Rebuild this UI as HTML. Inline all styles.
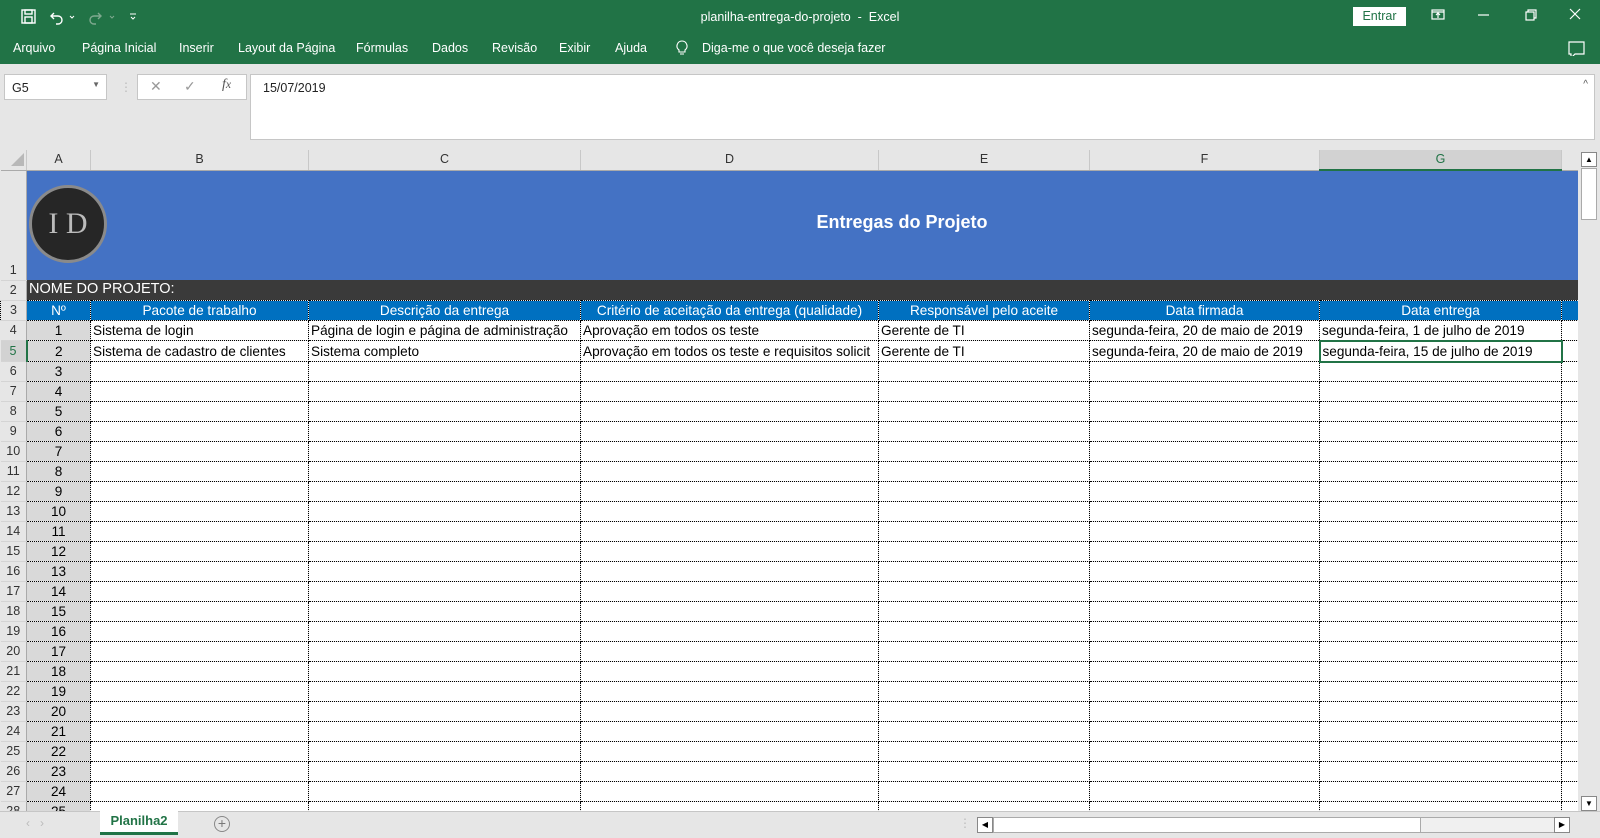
<!DOCTYPE html>
<html><head><meta charset="utf-8"><style>
*{margin:0;padding:0;box-sizing:border-box}
body{width:1600px;height:838px;overflow:hidden;background:#e6e6e6;font-family:"Liberation Sans",sans-serif;position:relative}
.abs{position:absolute}
#top{left:0;top:0;width:1600px;height:64px;background:#217346;color:#fff}
.menu span{position:absolute;top:41px;font-size:12.5px;color:#fff}
#grid{position:absolute;left:0;top:150px;border-collapse:collapse;table-layout:fixed;font-size:13.6px}
#grid td{height:20px;padding:0 2px;white-space:nowrap;overflow:hidden;line-height:19px}
#grid tr.h td{height:19px;background:#e6e6e6;text-align:center;color:#333;font-size:12.5px;border-right:1px solid #c8c8c8;border-bottom:1px solid #aaa}
#grid td.rh{background:#e6e6e6;color:#333;font-size:12.5px;text-align:center;border-right:1px solid #aaa;border-bottom:1px solid #d4d4d4;padding:0}
tr.d td{border:1px dotted #000;background:#fff}
tr.d td.a{background:#d9d9d9;text-align:center}
tr.d td.rh{border-top:none;border-left:none}
tr.c td{background:#0070c0;color:#fff;text-align:center;border:1px dotted #000}
</style></head><body>
<div id="top" class="abs">
 <svg class="abs" style="left:20px;top:8px" width="160" height="18" viewBox="0 0 160 18" fill="none" stroke="#fff" stroke-width="1.4">
  <rect x="2" y="2" width="13" height="13"/><rect x="5" y="2" width="7" height="4"/><rect x="5" y="9" width="7" height="6"/>
  <path d="M34 5 l-3 3 3 3 M31 8 h7 a4 4 0 0 1 0 8 h-2"/><path d="M50 8 l2 2 2-2" stroke-width="1"/>
  <path d="M78 5 l3 3 -3 3 M81 8 h-7 a4 4 0 0 0 0 8 h2" stroke="#7fa98f"/><path d="M90 8 l2 2 2-2" stroke="#7fa98f" stroke-width="1"/>
  <path d="M110 6 h6 M111 9 l2 2 2-2" stroke-width="1"/>
 </svg>
 <div class="abs" style="left:0;width:1600px;top:10px;text-align:center;font-size:12.5px">planilha-entrega-do-projeto &nbsp;-&nbsp; Excel</div>
 <div class="abs" style="left:1353px;top:7px;width:53px;height:19px;background:#fff;color:#217346;font-size:12.5px;text-align:center;line-height:19px">Entrar</div>
 <svg class="abs" style="left:1430px;top:6px" width="170" height="50" viewBox="0 0 170 50" fill="none" stroke="#fff" stroke-width="1.2">
  <rect x="2" y="4" width="12" height="9"/><path d="M2 6 h12 M8 12 v-5 M6 9 l2-2 2 2"/>
  <path d="M48 9 h11"/>
  <rect x="96" y="6" width="8" height="8"/><path d="M98 6 v-2 h8 v8 h-2"/>
  <path d="M140 3 l10 10 M150 3 l-10 10"/>
  <path d="M139 36 h15 v12 h-9 l-4 4 v-4 h-2 z"/>
 </svg>
 <div class="menu">
  <span style="left:13px">Arquivo</span><span style="left:82px">Página Inicial</span><span style="left:179px">Inserir</span><span style="left:238px">Layout da Página</span><span style="left:356px">Fórmulas</span><span style="left:432px">Dados</span><span style="left:492px">Revisão</span><span style="left:559px">Exibir</span><span style="left:615px">Ajuda</span>
  <svg style="position:absolute;left:676px;top:40px" width="12" height="16" fill="none" stroke="#fff" stroke-width="1.1"><path d="M6 1 a5 5 0 0 1 3 9 v2 h-6 v-2 a5 5 0 0 1 3-9z M4 14 h4"/></svg><span style="left:702px">Diga-me o que você deseja fazer</span>
 </div>
</div>
<div class="abs" style="left:4px;top:74px;width:103px;height:26px;background:#fff;border:1px solid #c6c6c6;font-size:12.5px;padding:6px 7px;color:#222">G5<span style="position:absolute;right:6px;top:5px;font-size:8px;color:#666">▼</span></div>
<div class="abs" style="left:120px;top:80px;color:#bbb;font-size:12px">⋮</div>
<div class="abs" style="left:137px;top:74px;width:110px;height:26px;background:#fff;border:1px solid #c6c6c6;font-size:14px;color:#999;padding:3px 0">
 <span style="position:absolute;left:12px;top:3px">✕</span><span style="position:absolute;left:46px;top:3px">✓</span><span style="position:absolute;left:84px;top:2px;font-family:'Liberation Serif',serif;font-style:italic;color:#555">f<small>x</small></span></div>
<div class="abs" style="left:250px;top:74px;width:1345px;height:66px;background:#fff;border:1px solid #c6c6c6;font-size:12.5px;padding:6px 12px;color:#222">15/07/2019<span style="position:absolute;right:6px;top:4px;font-size:10px;color:#555">^</span></div>

<table id="grid">
<colgroup><col style="width:26px"><col style="width:64px"><col style="width:218px"><col style="width:272px"><col style="width:298px"><col style="width:211px"><col style="width:230px"><col style="width:242px"><col style="width:17px"></colgroup>
<tr class="h"><td style="position:relative"><svg width="14" height="14" style="position:absolute;left:10px;top:3px"><path d="M13 0 V13 H0 z" fill="#b8b8b8"/></svg></td><td>A</td><td>B</td><td>C</td><td>D</td><td>E</td><td>F</td><td style="background:#d2d2d2;color:#217346;border-bottom:2px solid #217346">G</td><td style="border-right:none"></td></tr>
<tr><td class="rh" style="height:110px;vertical-align:bottom">1</td><td colspan="8" style="height:110px;background:#4472c4;position:relative">
 <div style="position:absolute;left:2px;top:14px;width:78px;height:78px;border-radius:50%;background:#262626;border:3px solid #8a8a8a;color:#bbb;font-family:'Liberation Serif',serif;font-size:30px;text-align:center;line-height:72px">I D</div>
 <div style="position:absolute;left:590px;width:570px;top:42px;text-align:center;color:#fff;font-weight:bold;font-size:18px">Entregas do Projeto</div></td></tr>
<tr><td class="rh">2</td><td colspan="8" style="background:#3a3a3a;color:#fff;font-size:14.5px">NOME DO PROJETO:</td></tr>
<tr class="c"><td class="rh" style="background:#e6e6e6;color:#333">3</td><td>Nº</td><td>Pacote de trabalho</td><td>Descrição da entrega</td><td>Critério de aceitação da entrega (qualidade)</td><td>Responsável pelo aceite</td><td>Data firmada</td><td>Data entrega</td><td style="border-right:none"></td></tr>
<tr class="d"><td class="rh">4</td><td class="a">1</td><td>Sistema de login</td><td>Página de login e página de administração</td><td>Aprovação em todos os teste</td><td>Gerente de TI</td><td>segunda-feira, 20 de maio de 2019</td><td>segunda-feira, 1 de julho de 2019</td><td></td></tr>
<tr class="d"><td class="rh" style="color:#217346;background:#d2d2d2;border-right:2px solid #217346">5</td><td class="a">2</td><td>Sistema de cadastro de clientes</td><td>Sistema completo</td><td>Aprovação em todos os teste e requisitos solicit</td><td>Gerente de TI</td><td>segunda-feira, 20 de maio de 2019</td><td style="border:2px solid #217346">segunda-feira, 15 de julho de 2019</td><td></td></tr>
<tr class="d"><td class="rh">6</td><td class="a">3</td><td></td><td></td><td></td><td></td><td></td><td></td><td></td></tr>
<tr class="d"><td class="rh">7</td><td class="a">4</td><td></td><td></td><td></td><td></td><td></td><td></td><td></td></tr>
<tr class="d"><td class="rh">8</td><td class="a">5</td><td></td><td></td><td></td><td></td><td></td><td></td><td></td></tr>
<tr class="d"><td class="rh">9</td><td class="a">6</td><td></td><td></td><td></td><td></td><td></td><td></td><td></td></tr>
<tr class="d"><td class="rh">10</td><td class="a">7</td><td></td><td></td><td></td><td></td><td></td><td></td><td></td></tr>
<tr class="d"><td class="rh">11</td><td class="a">8</td><td></td><td></td><td></td><td></td><td></td><td></td><td></td></tr>
<tr class="d"><td class="rh">12</td><td class="a">9</td><td></td><td></td><td></td><td></td><td></td><td></td><td></td></tr>
<tr class="d"><td class="rh">13</td><td class="a">10</td><td></td><td></td><td></td><td></td><td></td><td></td><td></td></tr>
<tr class="d"><td class="rh">14</td><td class="a">11</td><td></td><td></td><td></td><td></td><td></td><td></td><td></td></tr>
<tr class="d"><td class="rh">15</td><td class="a">12</td><td></td><td></td><td></td><td></td><td></td><td></td><td></td></tr>
<tr class="d"><td class="rh">16</td><td class="a">13</td><td></td><td></td><td></td><td></td><td></td><td></td><td></td></tr>
<tr class="d"><td class="rh">17</td><td class="a">14</td><td></td><td></td><td></td><td></td><td></td><td></td><td></td></tr>
<tr class="d"><td class="rh">18</td><td class="a">15</td><td></td><td></td><td></td><td></td><td></td><td></td><td></td></tr>
<tr class="d"><td class="rh">19</td><td class="a">16</td><td></td><td></td><td></td><td></td><td></td><td></td><td></td></tr>
<tr class="d"><td class="rh">20</td><td class="a">17</td><td></td><td></td><td></td><td></td><td></td><td></td><td></td></tr>
<tr class="d"><td class="rh">21</td><td class="a">18</td><td></td><td></td><td></td><td></td><td></td><td></td><td></td></tr>
<tr class="d"><td class="rh">22</td><td class="a">19</td><td></td><td></td><td></td><td></td><td></td><td></td><td></td></tr>
<tr class="d"><td class="rh">23</td><td class="a">20</td><td></td><td></td><td></td><td></td><td></td><td></td><td></td></tr>
<tr class="d"><td class="rh">24</td><td class="a">21</td><td></td><td></td><td></td><td></td><td></td><td></td><td></td></tr>
<tr class="d"><td class="rh">25</td><td class="a">22</td><td></td><td></td><td></td><td></td><td></td><td></td><td></td></tr>
<tr class="d"><td class="rh">26</td><td class="a">23</td><td></td><td></td><td></td><td></td><td></td><td></td><td></td></tr>
<tr class="d"><td class="rh">27</td><td class="a">24</td><td></td><td></td><td></td><td></td><td></td><td></td><td></td></tr>
<tr class="d"><td class="rh">28</td><td class="a">25</td><td></td><td></td><td></td><td></td><td></td><td></td><td></td></tr>
</table>

<div class="abs" style="left:1578px;top:150px;width:22px;height:661px;background:#e6e6e6"></div>
<div class="abs" style="left:1581px;top:152px;width:16px;height:15px;background:#fff;border:1px solid #888;font-size:8px;text-align:center;line-height:13px">▲</div>
<div class="abs" style="left:1581px;top:168px;width:16px;height:52px;background:#fff;border:1px solid #aaa"></div>
<div class="abs" style="left:1581px;top:796px;width:16px;height:15px;background:#fff;border:1px solid #888;font-size:8px;text-align:center;line-height:13px">▼</div>

<div class="abs" style="left:0;top:811px;width:1600px;height:27px;background:#e6e6e6;border-top:1px solid #c6c6c6"></div>
<div class="abs" style="left:26px;top:816px;color:#bbb;font-size:12px">‹ &nbsp; ›</div>
<div class="abs" style="left:100px;top:810px;width:78px;height:25px;background:#fff;border-bottom:3px solid #217346;color:#217346;font-weight:bold;font-size:13px;text-align:center;line-height:22px">Planilha2</div>
<div class="abs" style="left:214px;top:816px;width:16px;height:16px;border:1px solid #888;border-radius:50%;color:#777;font-size:14px;text-align:center;line-height:13px">+</div>
<div class="abs" style="left:959px;top:816px;color:#bbb;font-size:12px">⋮</div>
<div class="abs" style="left:977px;top:817px;width:593px;height:16px;background:#f0f0f0;border:1px solid #aaa"></div>
<div class="abs" style="left:977px;top:817px;width:16px;height:16px;background:#fff;border:1px solid #888;font-size:8px;text-align:center;line-height:14px">◀</div>
<div class="abs" style="left:993px;top:817px;width:428px;height:16px;background:#fff;border:1px solid #aaa"></div>
<div class="abs" style="left:1554px;top:817px;width:16px;height:16px;background:#fff;border:1px solid #888;font-size:8px;text-align:center;line-height:14px">▶</div>
</body></html>
